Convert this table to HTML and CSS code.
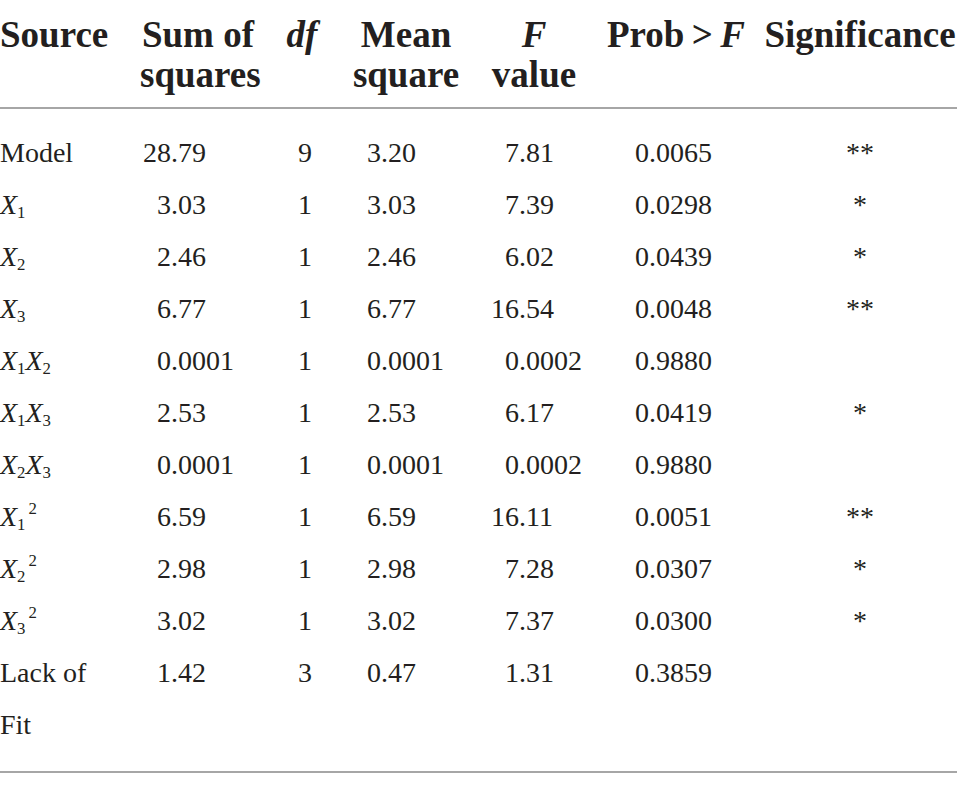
FILE: index.html
```html
<!DOCTYPE html>
<html lang="en">
<head>
  <meta charset="UTF-8">
  <meta name="viewport" content="width=device-width, initial-scale=1.0">
  <title>ANOVA table</title>
  <link rel="stylesheet" href="styles.css">
</head>
<body>
  <table class="anova">
    <colgroup>
      <col class="c-src">
      <col class="c-ss">
      <col class="c-df">
      <col class="c-ms">
      <col class="c-f">
      <col class="c-p">
      <col class="c-sig">
    </colgroup>
    <thead>
      <tr>
        <th class="src">Source</th>
        <th>Sum of<br>squares</th>
        <th class="df"><i>df</i></th>
        <th>Mean<br>square</th>
        <th><i>F</i><br>value</th>
        <th class="p">Prob&#8201;&gt;&#8201;<i>F</i></th>
        <th class="sig">Significance</th>
      </tr>
    </thead>
    <tbody>
      <tr>
        <td>Model</td>
        <td class="ss"><span class="int">28</span>.79</td>
        <td class="df">9</td>
        <td class="ms">3.20</td>
        <td class="f"><span class="int">7</span>.81</td>
        <td class="p">0.0065</td>
        <td class="sig">**</td>
      </tr>
      <tr>
        <td><i>X</i><sub>1</sub></td>
        <td class="ss"><span class="int">3</span>.03</td>
        <td class="df">1</td>
        <td class="ms">3.03</td>
        <td class="f"><span class="int">7</span>.39</td>
        <td class="p">0.0298</td>
        <td class="sig">*</td>
      </tr>
      <tr>
        <td><i>X</i><sub>2</sub></td>
        <td class="ss"><span class="int">2</span>.46</td>
        <td class="df">1</td>
        <td class="ms">2.46</td>
        <td class="f"><span class="int">6</span>.02</td>
        <td class="p">0.0439</td>
        <td class="sig">*</td>
      </tr>
      <tr>
        <td><i>X</i><sub>3</sub></td>
        <td class="ss"><span class="int">6</span>.77</td>
        <td class="df">1</td>
        <td class="ms">6.77</td>
        <td class="f"><span class="int">16</span>.54</td>
        <td class="p">0.0048</td>
        <td class="sig">**</td>
      </tr>
      <tr>
        <td><i>X</i><sub>1</sub><i>X</i><sub>2</sub></td>
        <td class="ss"><span class="int">0</span>.0001</td>
        <td class="df">1</td>
        <td class="ms">0.0001</td>
        <td class="f"><span class="int">0</span>.0002</td>
        <td class="p">0.9880</td>
        <td class="sig"></td>
      </tr>
      <tr>
        <td><i>X</i><sub>1</sub><i>X</i><sub>3</sub></td>
        <td class="ss"><span class="int">2</span>.53</td>
        <td class="df">1</td>
        <td class="ms">2.53</td>
        <td class="f"><span class="int">6</span>.17</td>
        <td class="p">0.0419</td>
        <td class="sig">*</td>
      </tr>
      <tr>
        <td><i>X</i><sub>2</sub><i>X</i><sub>3</sub></td>
        <td class="ss"><span class="int">0</span>.0001</td>
        <td class="df">1</td>
        <td class="ms">0.0001</td>
        <td class="f"><span class="int">0</span>.0002</td>
        <td class="p">0.9880</td>
        <td class="sig"></td>
      </tr>
      <tr>
        <td><i>X</i><sub>1</sub><sup>2</sup></td>
        <td class="ss"><span class="int">6</span>.59</td>
        <td class="df">1</td>
        <td class="ms">6.59</td>
        <td class="f"><span class="int">16</span>.11</td>
        <td class="p">0.0051</td>
        <td class="sig">**</td>
      </tr>
      <tr>
        <td><i>X</i><sub>2</sub><sup>2</sup></td>
        <td class="ss"><span class="int">2</span>.98</td>
        <td class="df">1</td>
        <td class="ms">2.98</td>
        <td class="f"><span class="int">7</span>.28</td>
        <td class="p">0.0307</td>
        <td class="sig">*</td>
      </tr>
      <tr>
        <td><i>X</i><sub>3</sub><sup>2</sup></td>
        <td class="ss"><span class="int">3</span>.02</td>
        <td class="df">1</td>
        <td class="ms">3.02</td>
        <td class="f"><span class="int">7</span>.37</td>
        <td class="p">0.0300</td>
        <td class="sig">*</td>
      </tr>
      <tr class="last">
        <td>Lack of<br>Fit</td>
        <td class="ss"><span class="int">1</span>.42</td>
        <td class="df">3</td>
        <td class="ms">0.47</td>
        <td class="f"><span class="int">1</span>.31</td>
        <td class="p">0.3859</td>
        <td class="sig"></td>
      </tr>
    </tbody>
  </table>
</body>
</html>
```

FILE: styles.css
```css
/* ANOVA table */
body {
  margin: 0;
  background: #fff;
  color: #231f20;
  font-family: "Liberation Serif", "Times New Roman", serif;
}
.anova {
  width: 957px;
  border-collapse: collapse;
  table-layout: fixed;
  border-bottom: 2px solid #a6a6a6;
}
.c-src { width: 140px; }
.c-ss { width: 116px; }
.c-df { width: 92px; }
.c-ms { width: 116px; }
.c-f { width: 140px; }
.c-p { width: 144px; }
.c-sig { width: 209px; }

/* header */
.anova th {
  font-size: 37px;
  font-weight: bold;
  line-height: 40px;
  padding: 15px 0 12px;
  text-align: center;
  vertical-align: top;
  white-space: nowrap;
  border-bottom: 2px solid #a6a6a6;
}
.anova th.src { text-align: left; }
.anova th.sig { padding-left: 15px; }

/* body */
.anova td {
  font-size: 28px;
  line-height: 52px;
  padding: 0;
  vertical-align: top;
  white-space: nowrap;
}
.anova tbody tr:first-child td { padding-top: 18px; }
.anova tr.last td { padding-bottom: 20px; }

.int {
  display: inline-block;
  width: 28px;
  text-align: right;
}
td.ss { padding-left: 3px; }
td.df { padding-left: 6px; text-align: center; }
td.ms { padding-left: 19px; }
td.f { padding-left: 27px; }
td.p { padding-left: 31px; }
td.sig { padding-left: 15px; text-align: center; }

sub, sup {
  font-size: 0.6em;
  line-height: 0;
}
sub { vertical-align: -0.25em; }
sup { vertical-align: 0.7em; margin-left: 3px; }
```
